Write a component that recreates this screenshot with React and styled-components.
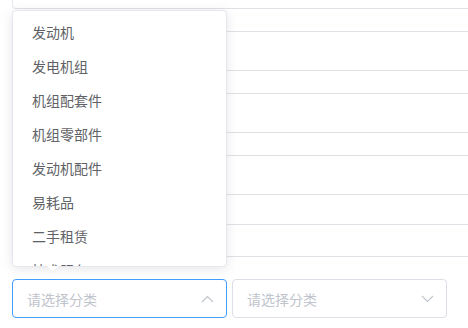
import React from "react";
import styled, { createGlobalStyle } from "styled-components";

const Global = createGlobalStyle`
  html, body { margin: 0; padding: 0; background: #fff; }
  body { font-family: "Noto Sans CJK SC", "Noto Sans", sans-serif; }
`;

const Page = styled.div`
  position: relative;
  width: 468px;
  height: 328px;
  overflow: hidden;
  background: #fff;
`;

const Rows = styled.div`
  margin-left: 12px;
  display: flex;
  flex-direction: column;
`;

const Row = styled.div`
  height: ${(p) => p.$h}px;
  border-bottom: 1px solid #dfe1e6;
  ${(p) =>
    p.$first &&
    `border-left: 1px solid #e4e7ed; border-bottom-left-radius: 4px;`}
`;

const Fields = styled.div`
  display: flex;
  gap: 5px;
  padding: 22px 0 0 12px;
`;

const Select = styled.div`
  box-sizing: border-box;
  width: 215px;
  height: 39px;
  border: 1px solid ${(p) => (p.$focus ? "#409eff" : "#dcdfe6")};
  border-radius: 4px;
  display: flex;
  align-items: center;
  justify-content: space-between;
  padding: 0 12px 0 14px;
  background: #fff;
`;

const Placeholder = styled.span`
  font-size: 14px;
  color: #c0c4cc;
  line-height: 1;
`;

const Dropdown = styled.div`
  position: absolute;
  left: 12px;
  top: 10px;
  box-sizing: border-box;
  width: 215px;
  height: 257px;
  background: #fff;
  border: 1px solid #e4e7ed;
  border-radius: 4px;
  box-shadow: 0 2px 12px 0 rgba(0, 0, 0, 0.1);
`;

const List = styled.ul`
  list-style: none;
  margin: 0;
  padding: 4px 0 0;
  height: 100%;
  overflow: hidden;
  box-sizing: border-box;
  border-radius: 4px;
`;

const Item = styled.li`
  height: 34px;
  line-height: 34px;
  padding: 0 19px;
  font-size: 14px;
  color: #606266;
  white-space: nowrap;
`;

const Arrow = styled.div`
  position: absolute;
  left: 34px;
  bottom: -7px;
  width: 0;
  height: 0;
  border-left: 6px solid transparent;
  border-right: 6px solid transparent;
  border-top: 6px solid #ebeef5;
  &::after {
    content: "";
    position: absolute;
    left: -6px;
    top: -7px;
    border-left: 6px solid transparent;
    border-right: 6px solid transparent;
    border-top: 6px solid #fff;
  }
`;

const Chevron = ({ up }) => (
  <svg width="13" height="8" viewBox="0 0 13 8">
    <polyline
      points={up ? "1,7 6.5,1.5 12,7" : "1,1 6.5,6.5 12,1"}
      fill="none"
      stroke="#c0c4cc"
      strokeWidth="1.1"
    />
  </svg>
);

const items = [
  "发动机",
  "发电机组",
  "机组配套件",
  "机组零部件",
  "发动机配件",
  "易耗品",
  "二手租赁",
  "技术服务",
];

const rowHeights = [8, 22, 38, 22, 38, 22, 38, 29, 31];

export default function App() {
  return (
    <Page>
      <Global />
      <Rows>
        {rowHeights.map((h, i) => (
          <Row key={i} $h={h} $first={i === 0} />
        ))}
      </Rows>
      <Fields>
        <Select $focus>
          <Placeholder>请选择分类</Placeholder>
          <Chevron up />
        </Select>
        <Select>
          <Placeholder>请选择分类</Placeholder>
          <Chevron />
        </Select>
      </Fields>
      <Dropdown>
        <List>
          {items.map((t) => (
            <Item key={t}>{t}</Item>
          ))}
        </List>
        <Arrow />
      </Dropdown>
    </Page>
  );
}
